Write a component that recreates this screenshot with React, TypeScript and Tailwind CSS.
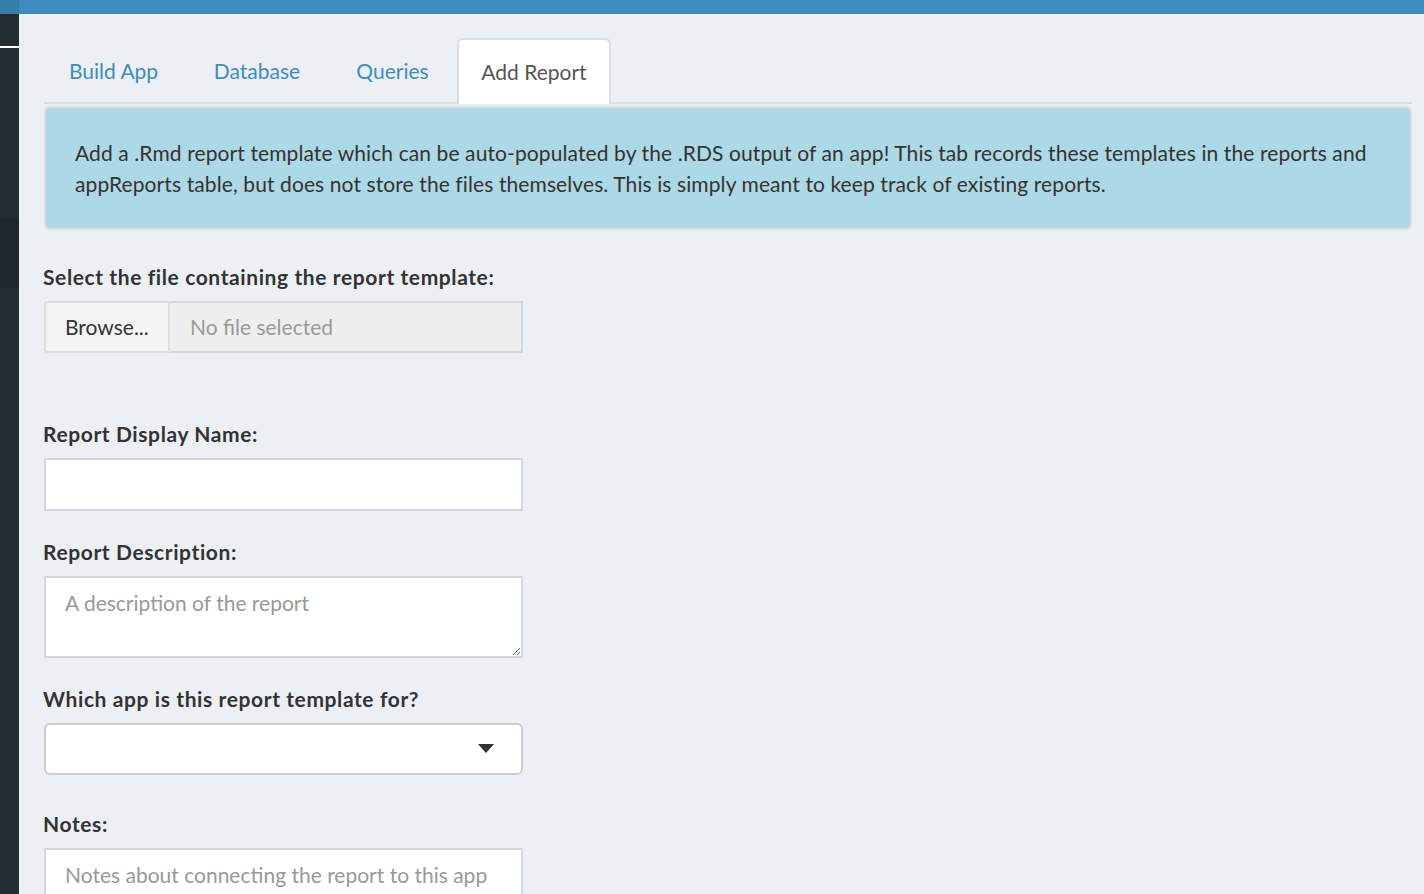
import React from "react";

const font = { fontFamily: "Lato, 'Open Sans', sans-serif" };

function Tab({ label, width, active, first }: { label: string; width: number; active?: boolean; first?: boolean }) {
  return (
    <div
      className={
        "flex h-[66px] shrink-0 items-center justify-center rounded-t-[6px] text-[21px] leading-[30px] mb-[-2px] " +
        (first ? "" : "ml-[3px] ") +
        (active
          ? "border-2 border-b-0 border-[#dddddd] bg-white text-[#555555]"
          : "border-2 border-transparent text-[#3c8dbc]")
      }
      style={{ width }}
    >
      {label}
    </div>
  );
}

function Label({ children, className = "" }: { children: React.ReactNode; className?: string }) {
  return (
    <div className={"text-[21px] leading-[30px] font-bold tracking-[0.6px] text-[#333333] ml-[-1px] whitespace-nowrap " + className}>
      {children}
    </div>
  );
}

export default function App() {
  return (
    <div className="flex h-[894px] w-[1424px] overflow-hidden" style={font}>
      <div className="flex w-[19px] shrink-0 flex-col">
        <div className="h-[14px] shrink-0 bg-[#367fa9]" />
        <div className="h-[32px] shrink-0 bg-[#222d32]" />
        <div className="h-[2px] shrink-0 bg-white" />
        <div className="h-[170px] shrink-0 bg-[#222d32]" />
        <div className="h-[70px] shrink-0 bg-[#1e282c]" />
        <div className="flex-1 bg-[#222d32]" />
      </div>
      <div className="flex min-w-0 flex-1 flex-col">
        <div className="h-[14px] shrink-0 bg-[#3c8dbc]" />
        <div className="flex-1 shrink-0 bg-[#ecf0f5] pl-[25px] pr-[12px] pt-[24px]">
          <div className="flex items-end border-b-2 border-[#dddddd]">
            <Tab label="Build App" width={139} first />
            <Tab label="Database" width={142} />
            <Tab label="Queries" width={123} />
            <Tab label="Add Report" width={154} active />
          </div>
          <div className="mt-[2px] rounded-[6px] border-2 border-[#d9dfe4] bg-[#add8e6] px-[29px] py-[29px] text-[21px] leading-[31px] tracking-[0.1px] text-[#333333]">
            <div className="whitespace-nowrap">
              Add a .Rmd report template which can be auto-populated by the .RDS output of an app! This tab records these templates in the reports and
            </div>
            <div className="whitespace-nowrap">
              appReports table, but does not store the files themselves. This is simply meant to keep track of existing reports.
            </div>
          </div>

          <div className="w-[479px]">
            <Label className="mt-[32px]">Select the file containing the report template:</Label>
            <div className="mt-[9px] flex h-[52px]">
              <div className="flex w-[126px] items-center rounded-l-[4px] border-2 border-[#dddddd] bg-[#f4f4f4] pl-[19px] text-[21px] text-[#333333]">
                Browse...
              </div>
              <div className="flex flex-1 items-center border-2 border-l-0 border-[#d2d6de] bg-[#eeeeee] pl-[20px] text-[21px] text-[#999999]">
                No file selected
              </div>
            </div>

            <Label className="mt-[66px]">Report Display Name:</Label>
            <div className="mt-[9px] h-[53px] border-2 border-[#d2d6de] bg-white" />

            <Label className="mt-[26px]">Report Description:</Label>
            <textarea
              className="mt-[9px] block h-[82px] w-full border-2 border-[#d2d6de] bg-white px-[19px] py-[10px] text-[21px] leading-[30px] text-[#555555] outline-none placeholder:text-[#999999]"
              style={font}
              placeholder="A description of the report"
            />

            <Label className="mt-[26px]">Which app is this report template for?</Label>
            <div className="mt-[9px] flex h-[52px] items-center justify-end rounded-[6px] border-2 border-[#cccccc] bg-white pr-[27px]">
              <svg width="16" height="10" viewBox="0 0 16 10">
                <path d="M0 0 L16 0 L8 9 Z" fill="#333333" />
              </svg>
            </div>

            <Label className="mt-[34px]">Notes:</Label>
            <textarea
              className="mt-[9px] block h-[82px] w-full border-2 border-[#d2d6de] bg-white px-[19px] py-[10px] text-[21px] leading-[30px] text-[#555555] outline-none placeholder:text-[#999999]"
              style={font}
              placeholder="Notes about connecting the report to this app"
            />
          </div>
        </div>
      </div>
    </div>
  );
}
